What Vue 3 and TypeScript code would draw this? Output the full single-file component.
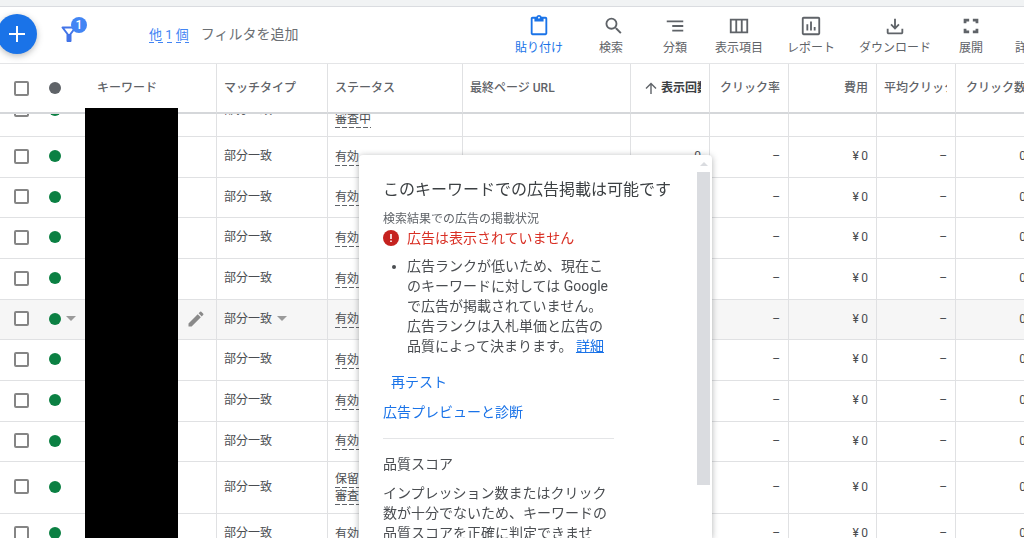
<script setup lang="ts">
import { onMounted, ref } from 'vue'

interface Tool {
  id: string
  label: string
  path: string
  active?: boolean
  wide?: boolean
}

interface Row {
  status: string[]
  hovered?: boolean
}

const tools: Tool[] = [
  {
    id: 'paste',
    label: '貼り付け',
    active: true,
    path: 'M19 2h-4.2C14.4.8 13.3 0 12 0S9.600.8 9.200 2H5C3.900 2 3 2.900 3 4v16c0 1.100.900 2 2 2h14c1.100 0 2-.900 2-2V4c0-1.100-.900-2-2-2zm-7 0c.550 0 1 .450 1 1s-.450 1-1 1-1-.450-1-1 .450-1 1-1zm7 18H5V4h2v3h10V4h2v16z',
  },
  {
    id: 'search',
    label: '検索',
    wide: true,
    path: 'M18.500 14h-.790l-.280-.270A6.470 6.470 0 0 0 19 9.500 6.500 6.500 0 1 0 12.500 16c1.610 0 3.090-.590 4.230-1.570l.270.280v.790l5 4.990L23.490 19l-4.990-5zm-6 0C10.010 14 8 11.990 8 9.500S10.010 5 12.500 5 17 7.010 17 9.500 14.990 14 12.500 14z',
  },
  { id: 'segment', label: '分類', path: 'M9 18h12v-2H9v2zM3 6v2h18V6H3zm6 7h12v-2H9v2z' },
  {
    id: 'columns',
    label: '表示項目',
    path: 'M2 4v16h20V4H2zm6 14H4V6h4v12zm6 0h-4V6h4v12zm6 0h-4V6h4v12z',
  },
  {
    id: 'reports',
    label: 'レポート',
    path: 'M9 17H7v-7h2v7zm4 0h-2V7h2v10zm4 0h-2v-4h2v4zm3 3H4V4h16v16zm0-18H4c-1.100 0-2 .900-2 2v16c0 1.100.900 2 2 2h16c1.100 0 2-.900 2-2V4c0-1.100-.900-2-2-2z',
  },
  {
    id: 'download',
    label: 'ダウンロード',
    path: 'M17 11l-1.400-1.400L13 12.200V4h-2v8.200L8.400 9.600 7 11l5 5 5-5zM3 15v4c0 1.100.900 2 2 2h14c1.100 0 2-.900 2-2v-4h-2v4H5v-4H3z',
  },
  {
    id: 'expand',
    label: '展開',
    path: 'M7 15H4v5h6v-3H7v-2zm-3-6h3V7h3V4H4v5zm13 8h-3v3h6v-5h-3v2zM14 4v3h3v2h3V4h-6z',
  },
  {
    id: 'more',
    label: '詳細',
    path: 'M12 8c1.100 0 2-.900 2-2s-.900-2-2-2-2 .900-2 2 .900 2 2 2zm0 2c-1.100 0-2 .900-2 2s.900 2 2 2 2-.900 2-2-.900-2-2-2zm0 6c-1.100 0-2 .900-2 2s.900 2 2 2 2-.900 2-2-.900-2-2-2z',
  },
]

const active = ['有効']
const pending = ['保留中', '審査中']

const rows: Row[] = [
  { status: pending },
  { status: active },
  { status: active },
  { status: active },
  { status: active },
  { status: active, hovered: true },
  { status: active },
  { status: active },
  { status: active },
  { status: pending },
  { status: active },
  { status: active },
]

const SCROLL_START = 29
const scroller = ref<HTMLElement | null>(null)

onMounted(() => {
  if (scroller.value) scroller.value.scrollTop = SCROLL_START
})
</script>

<template>
  <div class="page" lang="ja">
    <div class="strip"></div>

    <header class="toolbar">
      <button class="fab" type="button" aria-label="作成">
        <svg viewBox="0 0 24 24" width="24" height="24"><path d="M20 13h-7v7h-2v-7H4v-2h7V4h2v7h7z" fill="#fff" /></svg>
      </button>
      <button class="filter" type="button" aria-label="フィルタ">
        <svg viewBox="0 0 18 18" width="18" height="18">
          <path d="M2.500 2.500h13L10.500 9v7h-3V9z" fill="none" stroke="#4274e8" stroke-width="2" stroke-linejoin="round" />
          <path d="M7 9h4v8H7z" fill="#4274e8" />
        </svg>
        <span class="badge">1</span>
      </button>
      <a class="others" href="#">他 1 個</a>
      <button class="add-filter" type="button">フィルタを追加</button>

      <nav class="tools">
        <button v-for="t in tools" :key="t.id" type="button" class="tool" :class="{ active: t.active, wide: t.wide }">
          <svg viewBox="0 0 24 24" width="22" height="22"><path :d="t.path" fill="currentColor" /></svg>
          <span>{{ t.label }}</span>
        </button>
      </nav>
    </header>

    <main class="content">
      <div ref="scroller" class="scroller">
        <table class="grid">
          <colgroup>
            <col class="c-check" />
            <col class="c-dot" />
            <col class="c-keyword" />
            <col class="c-match" />
            <col class="c-status" />
            <col class="c-url" />
            <col class="c-num" />
            <col class="c-num" />
            <col class="c-cost" />
            <col class="c-num" />
            <col class="c-num" />
          </colgroup>
          <thead>
            <tr>
              <th class="check"><input type="checkbox" aria-label="すべて選択" /></th>
              <th class="dot-cell"><span class="dot neutral"></span></th>
              <th class="keyword">キーワード</th>
              <th class="line">マッチタイプ</th>
              <th class="line">ステータス</th>
              <th class="line">最終ページ URL</th>
              <th class="line sorted">
                <div class="sort">
                  <svg viewBox="0 0 12 12" width="12" height="12"><path d="M6 12V1.500M1 6.500L6 1.500l5 5" fill="none" stroke="#5f6368" stroke-width="1.400" /></svg>
                  <span class="clip">表示回数</span>
                </div>
              </th>
              <th class="line num"><div class="clip">クリック率</div></th>
              <th class="line num">費用</th>
              <th class="line"><div class="clip">平均クリック単価</div></th>
              <th class="line num">クリック数</th>
            </tr>
          </thead>
          <tbody>
            <tr v-for="(row, i) in rows" :key="i" :class="{ hovered: row.hovered, tall: row.status.length > 1 }">
              <td class="check"><input type="checkbox" aria-label="行を選択" /></td>
              <td class="dot-cell">
                <div class="inline"><span class="dot"></span><span v-if="row.hovered" class="caret"></span></div>
              </td>
              <td class="edit">
                <button v-if="row.hovered" type="button" class="pencil" aria-label="編集">
                  <svg viewBox="0 0 24 24" width="20" height="20"><path d="M3 17.250V21h3.750L17.810 9.940l-3.750-3.750L3 17.250zM20.710 7.040a1 1 0 0 0 0-1.410l-2.340-2.340a1 1 0 0 0-1.410 0l-1.830 1.830 3.750 3.750 1.830-1.830z" fill="#8a8a8a" /></svg>
                </button>
              </td>
              <td class="line">
                <div class="inline">部分一致<span v-if="row.hovered" class="caret"></span></div>
              </td>
              <td class="line status">
                <div v-for="s in row.status" :key="s"><span class="dashed">{{ s }}</span></div>
              </td>
              <td class="line"></td>
              <td class="line num">{{ row.status.length > 1 ? '' : '0' }}</td>
              <td class="line num">–</td>
              <td class="line num">{{ i === 0 ? '' : '¥\u20090' }}</td>
              <td class="line num">–</td>
              <td class="line num">0</td>
            </tr>
          </tbody>
        </table>
      </div>

      <div class="mask"></div>

      <aside class="popup">
        <div class="popup-body">
          <h2>このキーワードでの広告掲載は可能です</h2>
          <p class="caption">検索結果での広告の掲載状況</p>
          <p class="alert">
            <svg viewBox="0 0 16 16" width="16" height="16">
              <circle cx="8" cy="8" r="8" fill="#c5221f" />
              <path d="M8 4v5M8 10.500v1.500" stroke="#fff" stroke-width="1.600" />
            </svg>
            広告は表示されていません
          </p>
          <ul>
            <li>広告ランクが低いため、現在このキーワードに対しては Google で広告が掲載されていません。広告ランクは入札単価と広告の品質によって決まります。 <a href="#">詳細</a></li>
          </ul>
          <button type="button" class="retest">再テスト</button>
          <a class="preview" href="#">広告プレビューと診断</a>
          <hr />
          <h3>品質スコア</h3>
          <p>インプレッション数またはクリック数が十分でないため、キーワードの品質スコアを正確に判定できません。</p>
        </div>
        <div class="scrollbar">
          <span class="arrow"></span>
          <span class="thumb"></span>
        </div>
      </aside>
    </main>
  </div>
</template>

<style>
html,
body,
#app {
  height: 100%;
}
body {
  overflow: hidden;
}
</style>

<style scoped>
.page {
  display: flex;
  flex-direction: column;
  height: 100%;
  overflow: hidden;
  background: #fff;
  color: #4a4d51;
  font: 12px/16px Roboto, 'Noto Sans CJK JP', sans-serif;
}
.page * {
  box-sizing: border-box;
}
button {
  padding: 0;
  border: 0;
  background: none;
  color: inherit;
  font: inherit;
}
.strip {
  flex: none;
  height: 7px;
  background: #f1f3f4;
  border-bottom: 1px solid #dadce0;
}
.toolbar {
  display: flex;
  align-items: center;
  flex: none;
  height: 57px;
  padding-bottom: 2px;
  border-bottom: 1px solid #e4e5e7;
}
.fab {
  display: grid;
  place-items: center;
  flex: none;
  width: 40px;
  height: 40px;
  margin-left: -3px;
  border-radius: 50%;
  background: #1a73e8;
  box-shadow: 0 2px 6px rgba(60, 64, 67, 0.35);
}
.filter {
  position: relative;
  display: block;
  height: 18px;
  margin-left: 23px;
}
.filter svg {
  display: block;
}
.badge {
  position: absolute;
  left: 11px;
  top: -8px;
  width: 16px;
  height: 16px;
  border-radius: 50%;
  background: #4285f4;
  color: #fff;
  font-weight: 500;
  text-align: center;
}
.others {
  margin-left: 71px;
  padding-top: 2px;
  color: #4285f4;
  font-size: 13px;
  text-decoration: none;
  white-space: nowrap;
  background: repeating-linear-gradient(90deg, #4285f4 0 5px, transparent 5px 9px) left bottom / 100% 1px no-repeat;
}
.add-filter {
  margin-left: 12px;
  color: #6b6f74;
  font-size: 14px;
  white-space: nowrap;
}
.tools {
  display: flex;
  flex: none;
  margin-left: auto;
  margin-right: -31px;
  padding-top: 2px;
}
.tool {
  display: flex;
  flex-direction: column;
  align-items: center;
  gap: 3px;
  min-width: 56px;
  padding: 0 12px;
  color: #5f6368;
  white-space: nowrap;
}
.tool.wide {
  min-width: 72px;
}
.tool.active {
  color: #1a73e8;
}
.content {
  position: relative;
  flex: 1;
  min-height: 0;
}
.scroller {
  height: 100%;
  overflow: hidden;
}
.grid {
  width: calc(100% + 10px);
  table-layout: fixed;
  border-collapse: separate;
  border-spacing: 0;
}
.c-check {
  width: 43px;
}
.c-dot {
  width: 42px;
}
.c-keyword {
  width: 131px;
}
.c-match {
  width: 111px;
}
.c-status {
  width: 135px;
}
.c-num {
  width: 79px;
}
.c-cost {
  width: 88px;
}
th {
  position: sticky;
  top: 0;
  z-index: 1;
  height: 50px;
  padding: 0 8px 0 7px;
  background: #fff;
  border-bottom: 2px solid #d5d7da;
  color: #5f6368;
  font-weight: 500;
  text-align: left;
  white-space: nowrap;
}
td {
  height: 41px;
  padding: 0 8px 2px 7px;
  border-bottom: 1px solid #e0e1e3;
  white-space: nowrap;
}
tbody tr:nth-child(3n) td {
  height: 40px;
}
tbody tr.tall td {
  height: 52px;
}
.hovered td {
  background: #f6f6f6;
}
.line {
  border-left: 1px solid #e0e1e3;
}
.num {
  text-align: right;
}
th.keyword {
  padding-left: 12px;
}
.sorted {
  padding-left: 14px;
  color: #3c4043;
  font-weight: 700;
}
.sort {
  display: flex;
  align-items: center;
  gap: 4px;
}
.sort svg {
  flex: none;
}
.clip {
  min-width: 0;
  overflow: hidden;
}
.check {
  padding-left: 14px;
  padding-right: 0;
}
.check input {
  display: block;
  appearance: none;
  width: 15px;
  height: 15px;
  margin: 0;
  border: 2px solid #858585;
  border-radius: 2px;
  background: #fff;
}
.dot-cell {
  padding-left: 6px;
  padding-right: 0;
}
.dot {
  display: block;
  width: 12px;
  height: 12px;
  border-radius: 50%;
  background: #0b8043;
}
.neutral {
  background: #5f6368;
}
.inline {
  display: flex;
  align-items: center;
  gap: 5px;
}
.caret {
  border: 5px solid transparent;
  border-top-color: #9a9a9a;
  border-bottom: 0;
}
.edit {
  padding-right: 10px;
  text-align: right;
}
.pencil {
  display: inline-block;
  vertical-align: middle;
}
.pencil svg {
  display: block;
}
.status {
  padding-bottom: 0;
  line-height: 17px;
}
.dashed {
  display: inline-block;
  background: repeating-linear-gradient(90deg, #5f6368 0 5px, transparent 5px 7px) left bottom / 100% 1px no-repeat;
}
.mask {
  position: absolute;
  z-index: 2;
  left: 85px;
  top: 44px;
  bottom: 0;
  width: 93px;
  background: #000;
}
.popup {
  position: absolute;
  z-index: 3;
  left: 359px;
  top: 91px;
  bottom: 0;
  display: flex;
  width: 353px;
  overflow: hidden;
  border-radius: 4px 4px 0 0;
  background: #fff;
  box-shadow: 0 1px 6px rgba(60, 64, 67, 0.4);
  font-size: 14px;
  line-height: 20px;
}
.popup-body {
  display: flex;
  flex-direction: column;
  align-items: flex-start;
  flex: 1;
  min-width: 0;
  padding: 23px 0 0 24px;
}
.popup p,
.popup h2,
.popup h3,
.popup ul {
  width: 231px;
  margin: 0;
  font-weight: 400;
}
.popup h2 {
  width: auto;
  color: #3c4043;
  font-size: 16px;
  line-height: 24px;
  white-space: nowrap;
}
.popup .caption {
  margin-top: 8px;
  color: #5f6368;
  font-size: 12px;
  line-height: 18px;
}
.popup .alert {
  display: flex;
  align-items: center;
  gap: 8px;
  color: #d93025;
}
.popup ul {
  margin-top: 8px;
  padding-left: 24px;
}
.popup a {
  color: #1a73e8;
}
.retest {
  margin-top: 16px;
  padding-left: 8px;
  color: #1a73e8;
}
.popup .preview {
  margin-top: 10px;
  text-decoration: none;
}
.popup hr {
  width: 231px;
  margin: 16px 0 15px;
  border: 0;
  border-top: 1px solid #e4e5e7;
}
.popup h3 {
  margin-bottom: 9px;
  font-size: 14px;
}
.scrollbar {
  display: flex;
  flex-direction: column;
  align-items: center;
  width: 13px;
  margin-right: 2px;
}
.arrow {
  margin: 7px 0 6px;
  border: 4px solid transparent;
  border-bottom-color: #dadce0;
  border-top: 0;
}
.thumb {
  width: 100%;
  height: 313px;
  background: #dadce0;
}
</style>
